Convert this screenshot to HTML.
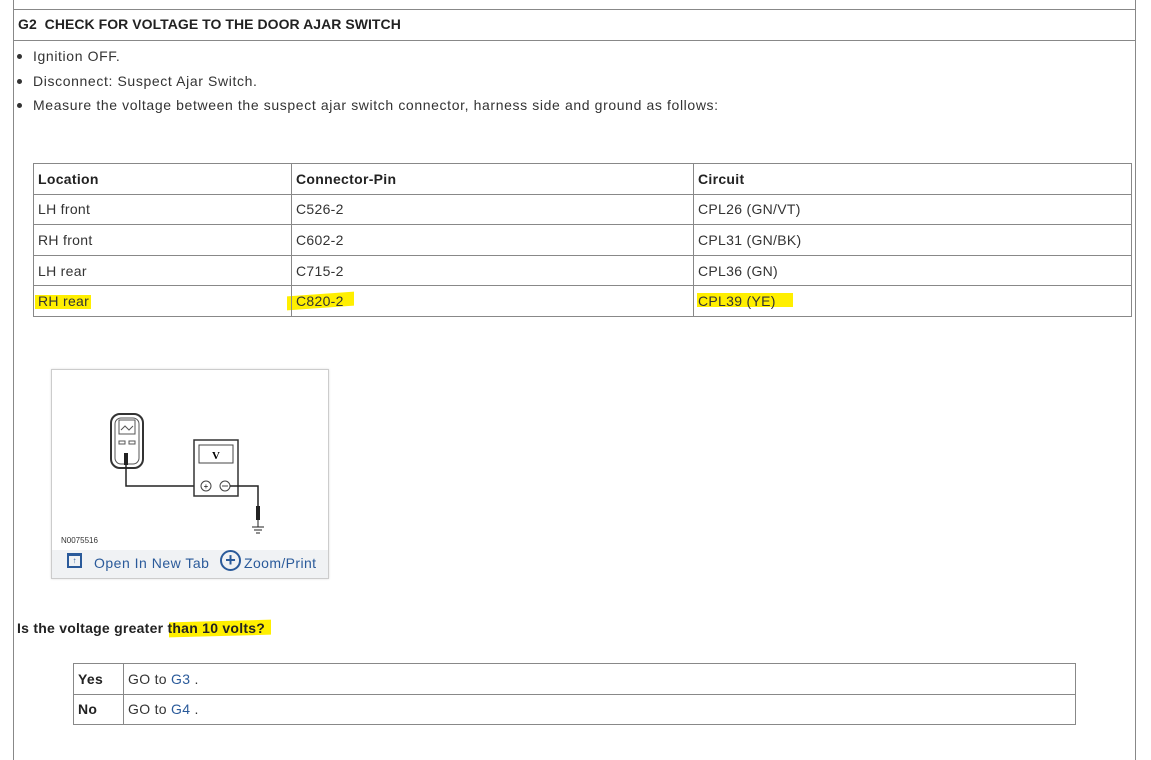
<!DOCTYPE html>
<html><head><meta charset="utf-8"><style>
body{margin:0;width:1151px;height:760px;background:#fff;font-family:"Liberation Sans",sans-serif;color:#2a2a2a;position:relative;overflow:hidden}
.a{position:absolute}
.hl{position:absolute;background:#ffef00;height:14px}
table{border-collapse:collapse;position:absolute;font-size:14px;letter-spacing:0.3px;color:#333}
td{border:1px solid #888;padding:0 4px;height:29.6px;vertical-align:middle}
a{color:#2a5a9a;text-decoration:none}
.bl div{position:relative;padding-left:17px}
.bl div:before{content:"";position:absolute;left:1px;top:10px;width:5px;height:5px;border-radius:50%;background:#333}
</style></head><body>
<div class="a" style="left:13px;top:0;width:1px;height:760px;background:#888"></div>
<div class="a" style="left:1135px;top:0;width:1px;height:760px;background:#888"></div>
<div class="a" style="left:13px;top:9px;width:1123px;height:1px;background:#888"></div>
<div class="a" style="left:13px;top:40px;width:1123px;height:1px;background:#888"></div>
<div class="a" style="left:18px;top:16px;font-size:14px;font-weight:bold;color:#222;letter-spacing:0.05px">G2&nbsp; CHECK FOR VOLTAGE TO THE DOOR AJAR SWITCH</div>
<div class="a bl" style="left:16px;top:44px;font-size:14px;line-height:24.5px;color:#333;letter-spacing:0.62px">
<div>Ignition OFF.</div>
<div>Disconnect: Suspect Ajar Switch.</div>
<div>Measure the voltage between the suspect ajar switch connector, harness side and ground as follows:</div>
</div>
<div class="hl" style="left:35px;top:295px;width:56px"></div>
<div class="hl" style="left:287px;top:294px;width:67px;transform:skewY(-4deg)"></div>
<div class="hl" style="left:697px;top:293px;width:96px"></div>
<div class="hl" style="left:169px;top:621px;width:102px;height:15px;transform:skewY(-1.5deg)"></div>
<table style="left:33px;top:163px;width:1099px">
<tr><td style="width:249px"><b style="color:#222">Location</b></td><td style="width:393px"><b style="color:#222">Connector-Pin</b></td><td><b style="color:#222">Circuit</b></td></tr>
<tr><td>LH front</td><td>C526-2</td><td>CPL26 (GN/VT)</td></tr>
<tr><td>RH front</td><td>C602-2</td><td>CPL31 (GN/BK)</td></tr>
<tr><td>LH rear</td><td>C715-2</td><td>CPL36 (GN)</td></tr>
<tr><td>RH rear</td><td>C820-2</td><td>CPL39 (YE)</td></tr>
</table>
<div class="a" style="left:51px;top:369px;width:276px;height:208px;border:1px solid #ccc;box-shadow:0 0 2px #ddd">
<svg width="276" height="180" style="position:absolute;left:0;top:0">
<rect x="59" y="44" width="32" height="54" rx="9" fill="none" stroke="#333" stroke-width="2"/>
<rect x="63" y="48" width="24" height="46" rx="6" fill="none" stroke="#555"/>
<rect x="67" y="50" width="16" height="14" fill="none" stroke="#555"/>
<path d="M69 60 L73 56 L77 60 L81 56" fill="none" stroke="#555"/>
<rect x="67" y="71" width="6" height="3" fill="none" stroke="#555"/><rect x="77" y="71" width="6" height="3" fill="none" stroke="#555"/>
<rect x="72" y="83" width="4" height="12" fill="#222"/>
<path d="M74 95 V116 H142" fill="none" stroke="#222" stroke-width="1.5"/>
<rect x="142" y="70" width="44" height="56" fill="#fff" stroke="#333" stroke-width="1.5"/>
<rect x="147" y="75" width="34" height="18" fill="none" stroke="#444"/>
<text x="164" y="89" font-size="11" font-family="Liberation Serif" font-weight="bold" text-anchor="middle">V</text>
<circle cx="154" cy="116" r="5" fill="#fff" stroke="#444"/><circle cx="173" cy="116" r="5" fill="#fff" stroke="#444"/>
<text x="154" y="119" font-size="8" text-anchor="middle">+</text><path d="M170 116 H176" stroke="#444"/>
<path d="M178 116 H206 V138" fill="none" stroke="#222" stroke-width="1.5"/>
<rect x="204" y="136" width="4" height="14" fill="#222"/>
<path d="M206 150 V157 M200 157 H212 M202 160 H210 M204 163 H208" stroke="#222"/>
</svg>
<div class="a" style="left:9px;top:166px;font-size:8px;color:#333">N0075516</div>
<div class="a" style="left:0;top:180px;width:276px;height:28px;background:#f0f2f4"></div>
<div class="a" style="left:15px;top:183px;width:11px;height:10px;border:2px solid #2a5a9a;border-top-width:3px;font-size:8px;color:#2a5a9a;line-height:10px;text-align:center">↑</div>
<div class="a" style="left:42px;top:185px;font-size:14px;color:#2a5a9a;letter-spacing:0.5px">Open In New Tab</div>
<div class="a" style="left:168px;top:180px;width:17px;height:17px;border:2px solid #2a5a9a;border-radius:50%;color:#2a5a9a;font-size:18px;line-height:17px;text-align:center;font-weight:bold">+</div>
<div class="a" style="left:192px;top:185px;font-size:14px;color:#2a5a9a;letter-spacing:0.4px">Zoom/Print</div>
</div>
<div class="a" style="left:17px;top:620px;font-size:14px;font-weight:bold;color:#222;letter-spacing:0.25px">Is the voltage greater than 10 volts?</div>
<table style="left:73px;top:663px;width:1003px">
<tr><td style="width:41px"><b style="color:#222">Yes</b></td><td>GO to <a>G3</a> .</td></tr>
<tr><td><b style="color:#222">No</b></td><td>GO to <a>G4</a> .</td></tr>
</table>
</body></html>
